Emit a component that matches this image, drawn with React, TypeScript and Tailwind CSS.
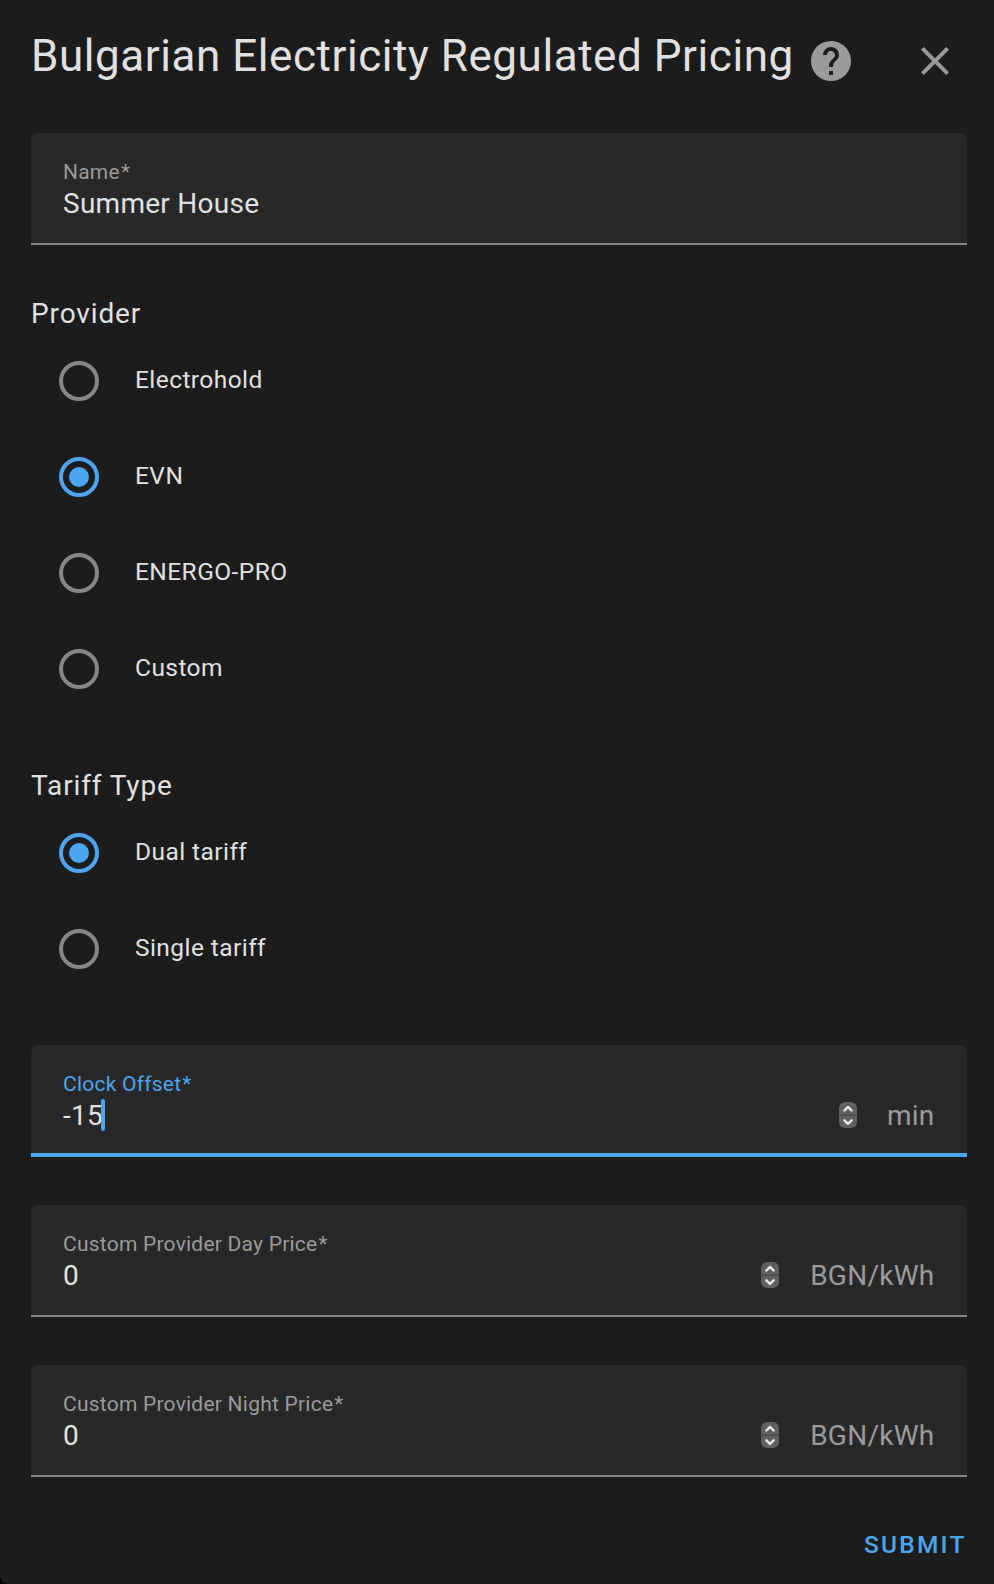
import clsx from "clsx";

const HELP =
  "M15.07,11.25L14.17,12.17C13.45,12.89 13,13.5 13,15H11V14.5C11,13.39 11.45,12.39 12.17,11.67L13.41,10.41C13.78,10.05 14,9.55 14,9C14,7.89 13.1,7 12,7A2,2 0 0,0 10,9H8A4,4 0 0,1 12,5A4,4 0 0,1 16,9C16,9.88 15.64,10.67 15.07,11.25M13,19H11V17H13M12,2A10,10 0 0,0 2,12A10,10 0 0,0 12,22A10,10 0 0,0 22,12C22,6.47 17.5,2 12,2Z";
const CLOSE =
  "M19,6.41L17.59,5L12,10.59L6.41,5L5,6.41L10.59,12L5,17.59L6.41,19L12,13.41L17.59,19L19,17.59L13.41,12L19,6.41Z";

function IconButton({ path, label, className }: { path: string; label: string; className: string }) {
  return (
    <button type="button" aria-label={label} className={clsx("shrink-0 text-[#9b9b9b]", className)}>
      <svg viewBox="0 0 24 24" className="block size-12" fill="currentColor">
        <path d={path} />
      </svg>
    </button>
  );
}

function Stepper({ className }: { className: string }) {
  return (
    <svg viewBox="0 0 18 26" className={clsx("block h-[26px] w-[18px] shrink-0", className)} fill="none">
      <rect width="18" height="26" rx="6" fill="#606060" />
      <rect y="12" width="18" height="2" fill="#4f4f4f" />
      <path
        d="M5.4 8.5 9 4.9l3.6 3.6M5.4 18.3l3.6 3.6 3.6-3.6"
        stroke="#e8e8e8"
        strokeWidth="2.4"
        strokeLinecap="round"
        strokeLinejoin="round"
      />
    </svg>
  );
}

type FieldProps = {
  label: string;
  value: string;
  suffix?: string;
  focused?: boolean;
  stepperClass?: string;
};

function Field({ label, value, suffix, focused, stepperClass = "mr-[31px]" }: FieldProps) {
  return (
    <div
      className={clsx(
        "h-28 rounded-t-lg bg-[#282828] px-8 pt-[27px]",
        focused
          ? "shadow-[inset_0_-4px_0_#4ba6ef]"
          : "shadow-[inset_0_-2px_0_#868686]",
      )}
    >
      <div
        className={clsx(
          "text-[21px] leading-6 tracking-[0.23px]",
          focused ? "text-[#4ba6ef]" : "text-[#9b9b9b]",
        )}
      >
        {label}
        <span className="ml-px">*</span>
      </div>
      <div className="mt-[3px] flex h-8 items-center text-[28px] leading-8 tracking-[0.2625px]">
        <span className="pt-0.5">{value}</span>
        {focused && <span className="-ml-0.5 h-8 w-1 rounded-full bg-[#4ba6ef]" />}
        {suffix && (
          <>
            <Stepper className={clsx("ml-auto", stepperClass)} />
            <span className="mr-[0.5px] pt-0.5 text-[#9b9b9b]">{suffix}</span>
          </>
        )}
      </div>
    </div>
  );
}

function RadioGroup({ title, options, selected }: { title: string; options: string[]; selected: string }) {
  return (
    <div role="radiogroup" className="mt-[50px]">
      <div className="h-[38px] text-[28px] leading-[37px] tracking-[0.875px]">{title}</div>
      {options.map((option) => {
        const on = option === selected;
        return (
          <div key={option} role="radio" aria-checked={on} className="flex h-24 items-center pl-7">
            <span
              className={clsx(
                "flex size-10 items-center justify-center rounded-full border-4",
                on ? "border-[#4ba6ef]" : "border-[#868686]",
              )}
            >
              {on && <span className="size-5 rounded-full bg-[#4ba6ef]" />}
            </span>
            <span className="ml-9 pb-[3px] text-[24.5px] leading-8 tracking-[0.43px]">{option}</span>
          </div>
        );
      })}
    </div>
  );
}

export default function App() {
  return (
    <div className="bg-black">
      <main className="h-[1584px] w-[994px] overflow-hidden rounded-bl-lg bg-[#1c1c1c] pr-[27px] pl-[31px] font-['Roboto',sans-serif] text-[#e1e1e1]">
        <header className="flex h-[133px] items-start">
          <h1 className="mt-7 text-[44px] leading-[56px] tracking-[0.55px] whitespace-nowrap">
            Bulgarian Electricity Regulated Pricing
          </h1>
          <IconButton path={HELP} label="Help" className="mt-[37px] ml-auto" />
          <IconButton path={CLOSE} label="Close" className="mt-[37px] mr-2 ml-14" />
        </header>

        <Field label="Name" value="Summer House" />

        <RadioGroup
          title="Provider"
          options={["Electrohold", "EVN", "ENERGO-PRO", "Custom"]}
          selected="EVN"
        />
        <RadioGroup title="Tariff Type" options={["Dual tariff", "Single tariff"]} selected="Dual tariff" />

        <div className="mt-12 flex flex-col gap-12">
          <Field label="Clock Offset" value="-15" suffix="min" focused stepperClass="mr-[29.5px]" />
          <Field label="Custom Provider Day Price" value="0" suffix="BGN/kWh" />
          <Field label="Custom Provider Night Price" value="0" suffix="BGN/kWh" />
        </div>

        <div className="mt-[52px] flex justify-end pr-[0.5px]">
          <button
            type="button"
            className="text-[24.5px] leading-8 font-medium tracking-[2.1875px] text-[#4ba6ef]"
          >
            SUBMIT
          </button>
        </div>
      </main>
    </div>
  );
}
